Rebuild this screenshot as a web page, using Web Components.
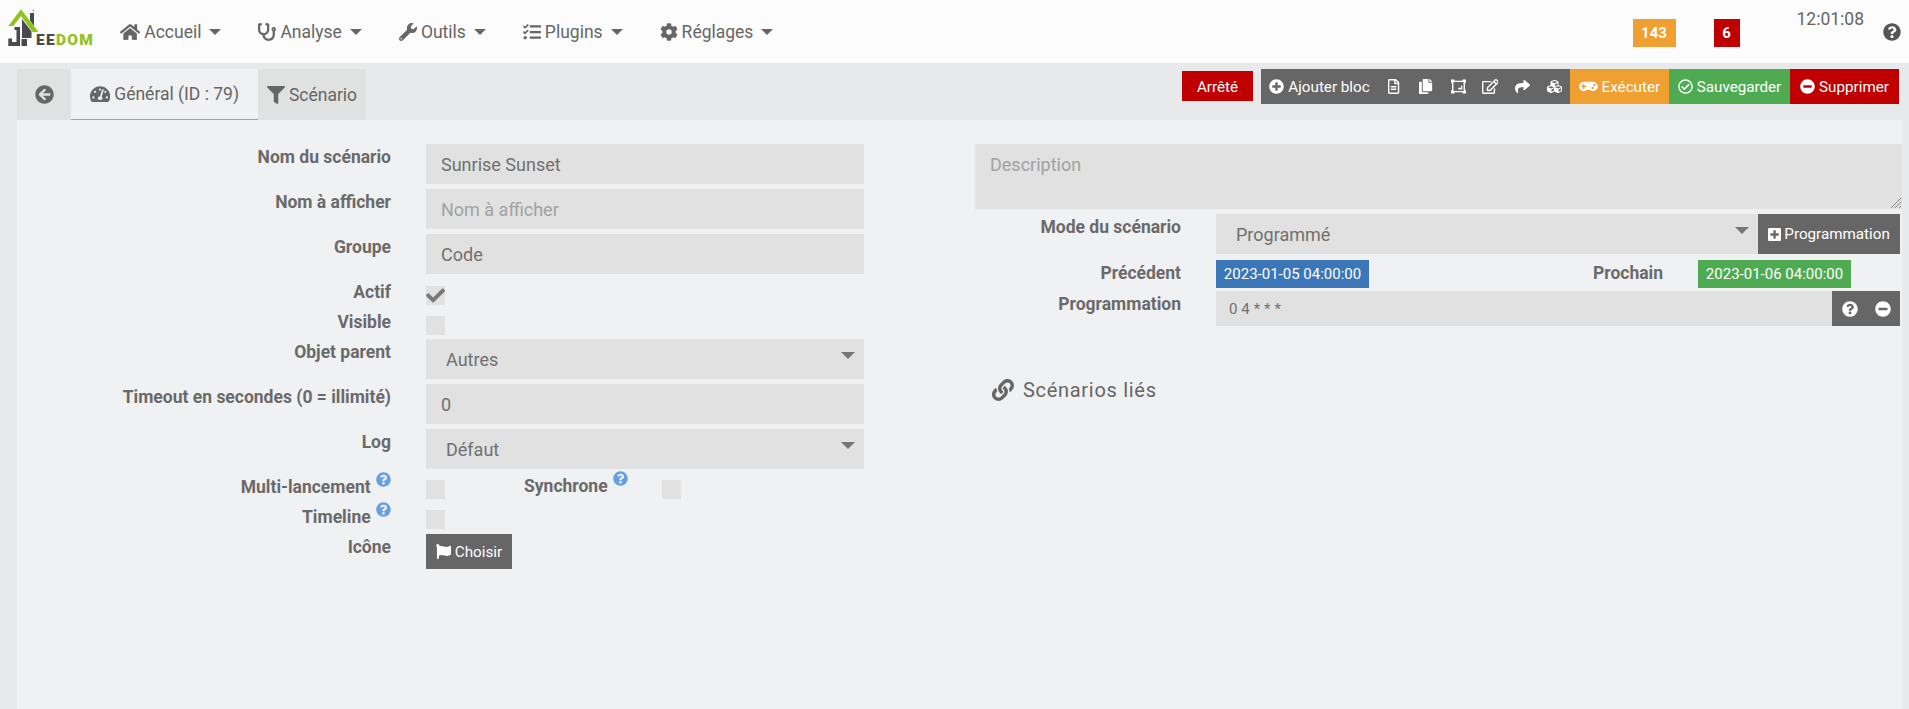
<!DOCTYPE html>
<html lang="fr">
<head>
<meta charset="utf-8">
<title>Jeedom - Scénario</title>
<style>
  html, body { margin: 0; height: 100%; overflow: hidden; }
  body { background: #e8e9eb; font-family: Roboto, "Liberation Sans", sans-serif; color: #666; }
</style>
</head>
<body>
<jd-app></jd-app>
<script>
const ICONS = {
  home: [576, 'M280.37 148.26L96 300.11V464a16 16 0 0 0 16 16l112.06-.29a16 16 0 0 0 15.92-16V368a16 16 0 0 1 16-16h64a16 16 0 0 1 16 16v95.64a16 16 0 0 0 16 16.05L464 480a16 16 0 0 0 16-16V300L295.67 148.26a12.19 12.19 0 0 0-15.3 0zM571.6 251.47L488 182.56V44.05a12 12 0 0 0-12-12h-56a12 12 0 0 0-12 12v72.61L318.47 43a48 48 0 0 0-61 0L4.34 251.47a12 12 0 0 0-1.6 16.9l25.5 31A12 12 0 0 0 45.15 301l235.22-193.74a12.19 12.19 0 0 1 15.3 0L530.9 301a12 12 0 0 0 16.9-1.6l25.5-31a12 12 0 0 0-1.7-16.93z'],
  stethoscope: [512, 'M447.1 112c-34.2.5-62.3 28.4-63 62.6-.5 24.3 12.5 45.6 32 56.8V344c0 57.3-50.2 104-112 104-60 0-109.2-44.1-111.9-99.2C265 333.8 320 269.2 320 192V36.6c0-11.4-8.1-21.3-19.3-23.5L237.8.5c-13-2.6-25.6 5.8-28.2 18.8L206.4 35c-2.6 13 5.8 25.6 18.8 28.2l30.7 6.1v121.4c0 52.9-42.2 96.7-95.1 97.2-53.4.5-96.9-42.7-96.9-96V69.4l30.7-6.1c13-2.6 21.4-15.2 18.8-28.2l-3.1-15.7C107.7 6.4 95.1-2 82.1.6L19.3 13C8.1 15.3 0 25.1 0 36.6V192c0 77.3 55.1 142 128.1 156.8C130.7 439.2 208.6 512 304 512c97 0 176-75.4 176-168V231.4c19.1-11.1 32-31.7 32-55.4 0-35.7-29.2-64.5-64.9-64zm.9 80c-8.8 0-16-7.2-16-16s7.2-16 16-16 16 7.2 16 16-7.2 16-16 16z'],
  wrench: [512, 'M507.73 109.1c-2.24-9.03-13.54-12.09-20.12-5.51l-74.36 74.36-67.88-11.31-11.31-67.88 74.36-74.36c6.62-6.62 3.43-17.9-5.66-20.16-47.38-11.74-99.55.91-136.58 37.93-39.64 39.64-50.55 97.1-34.05 147.2L18.74 402.76c-24.99 24.99-24.99 65.51 0 90.5 24.99 24.99 65.51 24.99 90.5 0l213.21-213.21c50.12 16.71 107.47 5.68 147.37-34.22 37.07-37.07 49.7-89.32 37.91-136.73zM64 472c-13.25 0-24-10.75-24-24 0-13.26 10.75-24 24-24s24 10.74 24 24c0 13.25-10.75 24-24 24z'],
  tasks: [512, 'M139.61 35.5a12 12 0 0 0-17 0L58.93 98.81l-22.7-22.12a12 12 0 0 0-17 0L3.53 92.41a12 12 0 0 0 0 17l47.59 47.4a12.78 12.78 0 0 0 17.61 0l15.59-15.62L156.52 69a12.09 12.09 0 0 0 .09-17zm0 159.19a12 12 0 0 0-17 0l-63.68 63.72-22.7-22.1a12 12 0 0 0-17 0L3.53 252a12 12 0 0 0 0 17L51 316.5a12.77 12.77 0 0 0 17.6 0l15.7-15.69 72.2-72.22a12 12 0 0 0 .09-16.9zM64 368c-26.49 0-48.59 21.5-48.59 48S37.53 464 64 464a48 48 0 0 0 0-96zm432 16H208a16 16 0 0 0-16 16v32a16 16 0 0 0 16 16h288a16 16 0 0 0 16-16v-32a16 16 0 0 0-16-16zm0-320H208a16 16 0 0 0-16 16v32a16 16 0 0 0 16 16h288a16 16 0 0 0 16-16V80a16 16 0 0 0-16-16zm0 160H208a16 16 0 0 0-16 16v32a16 16 0 0 0 16 16h288a16 16 0 0 0 16-16v-32a16 16 0 0 0-16-16z'],
  cog: [512, 'M487.4 315.7l-42.6-24.6c4.3-23.2 4.3-47 0-70.2l42.6-24.6c4.9-2.8 7.1-8.6 5.5-14-11.1-35.6-30-67.8-54.7-94.6-3.8-4.1-10-5.1-14.8-2.3L380.8 110c-17.9-15.4-38.5-27.3-60.8-35.1V25.8c0-5.6-3.9-10.5-9.4-11.7-36.7-8.2-74.3-7.8-109.2 0-5.5 1.2-9.4 6.1-9.4 11.7V75c-22.2 7.9-42.8 19.8-60.8 35.1L88.7 85.5c-4.9-2.8-11-1.9-14.8 2.3-24.7 26.7-43.6 58.9-54.7 94.6-1.7 5.4.6 11.2 5.5 14L67.3 221c-4.3 23.2-4.3 47 0 70.2l-42.6 24.6c-4.9 2.8-7.1 8.6-5.5 14 11.1 35.6 30 67.8 54.7 94.6 3.8 4.1 10 5.1 14.8 2.3l42.6-24.6c17.9 15.4 38.5 27.3 60.8 35.1v49.2c0 5.6 3.9 10.5 9.4 11.7 36.7 8.2 74.3 7.8 109.2 0 5.5-1.2 9.4-6.1 9.4-11.7v-49.2c22.2-7.9 42.8-19.8 60.8-35.1l42.6 24.6c4.9 2.8 11 1.9 14.8-2.3 24.7-26.7 43.6-58.9 54.7-94.6 1.5-5.5-.7-11.3-5.6-14.1zM256 336c-44.1 0-80-35.9-80-80s35.9-80 80-80 80 35.9 80 80-35.9 80-80 80z'],
  back: [512, 'M256 504C119 504 8 393 8 256S119 8 256 8s248 111 248 248-111 248-248 248zm28.9-143.6L209.4 288H392c13.3 0 24-10.7 24-24v-16c0-13.3-10.7-24-24-24H209.4l75.5-72.4c9.7-9.3 9.9-24.8.4-34.3l-11-10.9c-9.4-9.4-24.6-9.4-33.9 0L107.7 239c-9.4 9.4-9.4 24.6 0 33.9l132.7 132.7c9.4 9.4 24.6 9.4 33.9 0l11-10.9c9.5-9.5 9.3-25-.4-34.3z'],
  gauge: [576, 'M288 32C128.94 32 0 160.94 0 320c0 52.8 14.25 102.26 39.06 144.8 5.61 9.62 16.3 15.2 27.44 15.2h443c11.14 0 21.83-5.58 27.44-15.2C561.75 422.26 576 372.8 576 320c0-159.06-128.94-288-288-288zm0 64c14.71 0 26.58 10.13 30.32 23.65-1.11 2.26-2.64 4.23-3.45 6.67l-9.22 27.67c-5.13 3.49-10.97 6.01-17.64 6.01-17.67 0-32-14.33-32-32S270.33 96 288 96zM96 384c-17.67 0-32-14.33-32-32s14.33-32 32-32 32 14.33 32 32-14.33 32-32 32zm48-160c-17.67 0-32-14.33-32-32s14.33-32 32-32 32 14.33 32 32-14.33 32-32 32zm246.77-72.41l-61.33 184C343.13 347.33 352 364.54 352 384c0 11.72-3.38 22.55-8.88 32H232.88c-5.5-9.45-8.88-20.28-8.88-32 0-33.94 26.5-61.43 59.9-63.59l61.34-184.01c4.17-12.56 17.73-19.45 30.36-15.17 12.57 4.19 19.35 17.79 15.17 30.36zm14.66 57.2l15.52-46.55c3.47-1.29 7.13-2.23 11.05-2.23 17.67 0 32 14.33 32 32s-14.33 32-32 32c-11.38-.01-20.89-6.28-26.57-15.22zM480 384c-17.67 0-32-14.33-32-32s14.33-32 32-32 32 14.33 32 32-14.33 32-32 32z'],
  filter: [512, 'M487.976 0H24.028C2.71 0-8.047 25.866 7.058 40.971L192 225.941V432c0 7.831 3.821 15.17 10.237 19.662l80 55.98C298.02 518.69 320 507.493 320 487.98V225.941l184.947-184.97C520.021 25.896 509.338 0 487.976 0z'],
  plusc: [512, 'M256 8C119 8 8 119 8 256s111 248 248 248 248-111 248-248S393 8 256 8zm144 276c0 6.6-5.4 12-12 12h-92v92c0 6.6-5.4 12-12 12h-56c-6.6 0-12-5.4-12-12v-92h-92c-6.6 0-12-5.4-12-12v-56c0-6.6 5.4-12 12-12h92v-92c0-6.6 5.4-12 12-12h56c6.6 0 12 5.4 12 12v92h92c6.6 0 12 5.4 12 12v56z'],
  file: [384, 'M288 248v28c0 6.6-5.4 12-12 12H108c-6.6 0-12-5.4-12-12v-28c0-6.6 5.4-12 12-12h168c6.6 0 12 5.4 12 12zm-12 72H108c-6.6 0-12 5.4-12 12v28c0 6.6 5.4 12 12 12h168c6.6 0 12-5.4 12-12v-28c0-6.6-5.4-12-12-12zm108-188.1V464c0 26.5-21.5 48-48 48H48c-26.5 0-48-21.5-48-48V48C0 21.5 21.5 0 48 0h204.1C264.8 0 277 5.1 286 14.1L369.9 98c9 8.9 14.1 21.2 14.1 33.9zm-128-80V128h76.1L256 51.9zM336 464V176H232c-13.3 0-24-10.7-24-24V48H48v416h288z'],
  copy: [448, 'M320 448v40c0 13.255-10.745 24-24 24H24c-13.255 0-24-10.745-24-24V120c0-13.255 10.745-24 24-24h72v296c0 30.879 25.121 56 56 56h168zm0-344V0H152c-13.255 0-24 10.745-24 24v368c0 13.255 10.745 24 24 24h272c13.255 0 24-10.745 24-24V128H344c-13.2 0-24-10.8-24-24zm120.971-31.029L375.029 7.029A24 24 0 0 0 358.059 0H352v96h96v-6.059a24 24 0 0 0-7.029-16.97z'],
  frame: [512, 'M0 20h120v36h272V20h120v112h-34v248h34v112H392v-36H120v36H0V380h34V132H0zM84 100V412H428V100zM250 300h90v-70h44v126H250z', 'evenodd'],
  edit: [576, 'M402.3 344.9l32-32c5-5 13.7-1.5 13.7 5.7V464c0 26.5-21.5 48-48 48H48c-26.5 0-48-21.5-48-48V112c0-26.5 21.5-48 48-48h273.5c7.1 0 10.7 8.6 5.7 13.7l-32 32c-1.5 1.5-3.5 2.3-5.7 2.3H48v352h352V350.5c0-2.1.8-4.1 2.3-5.6zm156.6-201.8L296.3 405.7l-90.4 10c-26.2 2.9-48.5-19.2-45.6-45.6l10-90.4L432.9 17.1c22.9-22.9 59.9-22.9 82.7 0l43.2 43.2c22.9 22.9 22.9 60 .1 82.8zM460.1 174L402 115.9 216.2 301.8l-7.3 65.3 65.3-7.3L460.1 174zm64.8-79.7l-43.2-43.2c-4.1-4.1-10.8-4.1-14.8 0L436 82l58.1 58.1 30.9-30.9c4-4.2 4-10.8-.1-14.9z'],
  share: [512, 'M503.691 189.836L327.687 37.851C312.281 24.546 288 35.347 288 56.015v80.053C127.371 137.907 0 170.1 0 322.326c0 61.441 39.581 122.309 83.333 154.132 13.653 9.931 33.111-2.533 28.077-18.631C66.066 312.814 132.917 274.316 288 272.085V360c0 20.7 24.3 31.453 39.687 18.164l176.004-152c11.071-9.562 11.086-26.753 0-36.328z'],
  cubes: [512, 'M488.6 250.2L392 214V105.5c0-15-9.3-28.4-23.4-33.7l-100-37.5c-8.1-3.1-17.1-3.1-25.3 0l-100 37.5c-14.1 5.3-23.4 18.7-23.4 33.7V214l-96.6 36.2C9.3 255.5 0 268.9 0 283.9V394c0 13.6 7.7 26.1 19.9 32.2l100 50c10.1 5.1 22.1 5.1 32.2 0l103.9-52 103.9 52c10.1 5.1 22.1 5.1 32.2 0l100-50c12.2-6.1 19.9-18.6 19.9-32.2V283.9c0-15-9.3-28.4-23.4-33.7zM358 214.8l-85 31.9v-68.2l85-37v73.3zM154 104.1l102-38.2 102 38.2v.6l-102 41.4-102-41.4v-.6zm84 291.1l-85 42.5v-79.1l85-38.8v75.4zm0-112l-102 41.4-102-41.4v-.6l102-38.2 102 38.2v.6zm240 112l-85 42.5v-79.1l85-38.8v75.4zm0-112l-102 41.4-102-41.4v-.6l102-38.2 102 38.2v.6z'],
  gamepad: [640, 'M480.07 96H160a160 160 0 1 0 114.24 272h91.52A160 160 0 1 0 480.07 96zM248 268a12 12 0 0 1-12 12h-52v52a12 12 0 0 1-12 12h-24a12 12 0 0 1-12-12v-52H84a12 12 0 0 1-12-12v-24a12 12 0 0 1 12-12h52v-52a12 12 0 0 1 12-12h24a12 12 0 0 1 12 12v52h52a12 12 0 0 1 12 12zm216 76a40 40 0 1 1 40-40 40 40 0 0 1-40 40zm64-96a40 40 0 1 1 40-40 40 40 0 0 1-40 40z'],
  checkc: [512, 'M256 8C119.033 8 8 119.033 8 256s111.033 248 248 248 248-111.033 248-248S392.967 8 256 8zm0 48c110.532 0 200 89.451 200 200 0 110.532-89.451 200-200 200-110.532 0-200-89.451-200-200 0-110.532 89.451-200 200-200m140.204 130.267l-22.536-22.718c-4.667-4.705-12.265-4.736-16.97-.068L215.346 303.697l-59.792-60.277c-4.667-4.705-12.265-4.736-16.97-.069l-22.719 22.536c-4.705 4.667-4.736 12.265-.068 16.971l90.781 91.516c4.667 4.705 12.265 4.736 16.97.068l172.589-171.204c4.704-4.668 4.734-12.266.067-16.971z'],
  minusc: [512, 'M256 8C119 8 8 119 8 256s111 248 248 248 248-111 248-248S393 8 256 8zM124 296c-6.6 0-12-5.4-12-12v-56c0-6.6 5.4-12 12-12h264c6.6 0 12 5.4 12 12v56c0 6.6-5.4 12-12 12H124z'],
  help: [512, 'M504 256c0 136.997-111.043 248-248 248S8 392.997 8 256C8 119.083 119.043 8 256 8s248 111.083 248 248zM262.655 90c-54.497 0-89.255 22.957-116.549 63.758-3.536 5.286-2.353 12.415 2.715 16.258l34.699 26.31c5.205 3.947 12.621 3.008 16.665-2.122 17.864-22.658 30.113-35.797 57.303-35.797 20.429 0 45.698 13.148 45.698 32.958 0 14.976-12.363 22.667-32.534 33.976C247.128 238.528 216 254.941 216 296v4c0 6.627 5.373 12 12 12h56c6.627 0 12-5.373 12-12v-1.333c0-28.462 83.186-29.647 83.186-106.667 0-58.002-60.165-102-116.531-102zM256 338c-25.365 0-46 20.635-46 46 0 25.364 20.635 46 46 46s46-20.636 46-46c0-25.365-20.635-46-46-46z'],
  pluss: [448, 'M400 32H48C21.5 32 0 53.5 0 80v352c0 26.5 21.5 48 48 48h352c26.5 0 48-21.5 48-48V80c0-26.5-21.5-48-48-48zm-32 252c0 6.6-5.4 12-12 12h-92v92c0 6.6-5.4 12-12 12h-56c-6.6 0-12-5.4-12-12v-92H92c-6.6 0-12-5.4-12-12v-56c0-6.6 5.4-12 12-12h92v-92c0-6.6 5.4-12 12-12h56c6.6 0 12 5.4 12 12v92h92c6.6 0 12 5.4 12 12v56z'],
  flag: [512, 'M349.565 98.783C295.978 98.783 251.721 64 184.348 64c-24.955 0-47.309 4.384-68.045 12.013a55.947 55.947 0 0 0 3.586-23.562C118.117 24.015 94.806 1.206 66.338.048 34.345-1.254 8 24.296 8 56c0 19.026 9.497 35.825 24 45.945V488c0 13.255 10.745 24 24 24h16c13.255 0 24-10.745 24-24v-94.4c28.311-12.064 63.582-22.122 114.435-22.122 53.588 0 97.844 34.783 165.217 34.783 48.169 0 86.667-16.294 122.505-40.858C506.84 359.452 512 349.571 512 339.045v-243.1c0-23.393-24.269-38.87-45.485-29.016-34.338 15.948-76.454 31.854-116.95 31.854z'],
  link: [512, 'M326.612 185.391c59.747 59.809 58.927 155.698.36 214.59-.11.12-.24.25-.36.37l-67.2 67.2c-59.27 59.27-155.699 59.262-214.96 0-59.27-59.26-59.27-155.7 0-214.96l37.106-37.106c9.84-9.84 26.786-3.3 27.294 10.606.648 17.722 3.826 35.527 9.69 52.721 1.986 5.822.567 12.262-3.783 16.612l-13.087 13.087c-28.026 28.026-28.905 73.66-1.155 101.96 28.024 28.579 74.086 28.749 102.325.51l67.2-67.19c28.191-28.191 28.073-73.757 0-101.83-3.701-3.694-7.429-6.564-10.341-8.569a16.037 16.037 0 0 1-6.947-12.606c-.396-10.567 3.348-21.456 11.698-29.806l21.054-21.055c5.521-5.521 14.182-6.199 20.584-1.731a152.482 152.482 0 0 1 20.522 17.197zM467.547 44.449c-59.261-59.262-155.69-59.27-214.96 0l-67.2 67.2c-.12.12-.25.25-.36.37-58.566 58.892-59.387 154.781.36 214.59a152.454 152.454 0 0 0 20.521 17.196c6.402 4.468 15.064 3.789 20.584-1.731l21.054-21.055c8.35-8.35 12.094-19.239 11.698-29.806a16.037 16.037 0 0 0-6.947-12.606c-2.912-2.005-6.64-4.875-10.341-8.569-28.073-28.073-28.191-73.639 0-101.83l67.2-67.19c28.239-28.239 74.3-28.069 102.325.51 27.75 28.3 26.872 73.934-1.155 101.96l-13.087 13.087c-4.35 4.35-5.769 10.79-3.783 16.612 5.864 17.194 9.042 34.999 9.69 52.721.509 13.906 17.454 20.446 27.294 10.606l37.106-37.106c59.271-59.259 59.271-155.699.001-214.959z'],
  check: [512, 'M173.898 439.404l-166.4-166.4c-9.997-9.997-9.997-26.206 0-36.204l36.203-36.204c9.997-9.998 26.207-9.998 36.204 0L192 312.69 432.095 72.596c9.997-9.997 26.207-9.997 36.204 0l36.203 36.204c9.997 9.997 9.997 26.206 0 36.204l-294.4 294.401c-9.998 9.997-26.207 9.997-36.204-.001z']
};

class JdIcon extends HTMLElement {
  connectedCallback() {
    const [w, d, rule] = ICONS[this.getAttribute('name')];
    this.attachShadow({ mode: 'open' });
    this.shadowRoot.innerHTML = `
      <style>
        :host { display: inline-flex; align-items: center; flex: none; }
        svg { height: 1em; width: auto; display: block; fill: currentColor; }
      </style>
      <svg viewBox="0 0 ${w} 512" fill-rule="${rule || 'nonzero'}" aria-hidden="true"><path d="${d}"/></svg>`;
  }
}
customElements.define('jd-icon', JdIcon);

class JdLogo extends HTMLElement {
  connectedCallback() {
    this.attachShadow({ mode: 'open' });
    this.shadowRoot.innerHTML = `
      <style>
        :host { display: block; position: relative; width: 86px; height: 39px; flex: none; align-self: flex-start; margin-top: 8px; }
        svg { position: absolute; left: 0; top: 0; }
        span { position: absolute; left: 28px; top: 26px; font: 900 15.5px/13px Roboto, sans-serif; letter-spacing: 1.3px; color: #4a4a4c; }
        b { font-weight: 900; color: #93c11f; }
      </style>
      <svg width="34" height="39" viewBox="0 0 34 39">
        <path d="M14 11 L23.5 23.5 V30 H14Z M22 5 H26 V18 L22 12.5Z" fill="#4a4a4c"/>
        <path d="M6.5 19 H12 V38 H0.3 V30.5 H4 V34 H8.5 V22 H6.5Z" fill="#4a4a4c"/>
        <path d="M13.5 31 H19 V38 H13.5Z" fill="#4a4a4c"/>
        <path d="M0.3 18 L13 1.3 L30.5 24 L24.5 24 L13 8 L5.3 18Z" fill="#8fc31f"/>
        <circle cx="25.5" cy="2.5" r="1" fill="#aaa"/>
      </svg>
      <span>EE<b>DOM</b></span>`;
  }
}
customElements.define('jd-logo', JdLogo);

class JdNavItem extends HTMLElement {
  connectedCallback() {
    this.attachShadow({ mode: 'open' });
    this.shadowRoot.innerHTML = `
      <style>
        :host { display: flex; align-items: center; gap: 4px; font-size: 17.5px; color: #666; }
        jd-icon { font-size: 18px; }
        i { width: 0; height: 0; margin-left: 4px; border: 6px solid transparent; border-top-color: #666; border-bottom: 0; }
      </style>
      <jd-icon name="${this.getAttribute('icon')}"></jd-icon><slot></slot><i></i>`;
  }
}
customElements.define('jd-nav-item', JdNavItem);

class JdBadge extends HTMLElement {
  connectedCallback() {
    this.attachShadow({ mode: 'open' });
    this.shadowRoot.innerHTML = `
      <style>
        :host { display: flex; align-items: center; justify-content: center; color: #fff; flex: none; }
      </style>
      <slot></slot>`;
  }
}
customElements.define('jd-badge', JdBadge);

class JdNavbar extends HTMLElement {
  connectedCallback() {
    this.attachShadow({ mode: 'open' });
    this.shadowRoot.innerHTML = `
      <style>
        :host { display: flex; align-items: center; height: 63px; padding: 0 8px; box-sizing: border-box; background: #fcfcfc; }
        nav { display: flex; margin-left: 26px; gap: 37px; }
        .right { margin-left: auto; display: flex; height: 100%; }
        jd-badge { height: 28px; margin-top: 19px; font-weight: 700; font-size: 15px; }
        .warn { width: 43px; background: #f0a030; margin-right: 38px; }
        .err { width: 26px; background: #c00000; margin-right: 57px; }
        time { font-size: 17.5px; line-height: 20px; margin-top: 9px; color: #666; }
        jd-icon { font-size: 18px; margin: 23px 0 0 19px; height: 18px; color: #555; }
      </style>
      <jd-logo></jd-logo>
      <nav>
        <jd-nav-item icon="home">Accueil</jd-nav-item>
        <jd-nav-item icon="stethoscope">Analyse</jd-nav-item>
        <jd-nav-item icon="wrench">Outils</jd-nav-item>
        <jd-nav-item icon="tasks">Plugins</jd-nav-item>
        <jd-nav-item icon="cog">Réglages</jd-nav-item>
      </nav>
      <div class="right">
        <jd-badge class="warn">143</jd-badge>
        <jd-badge class="err">6</jd-badge>
        <time>12:01:08</time>
        <jd-icon name="help"></jd-icon>
      </div>`;
  }
}
customElements.define('jd-navbar', JdNavbar);

class JdTab extends HTMLElement {
  connectedCallback() {
    this.attachShadow({ mode: 'open' });
    this.shadowRoot.innerHTML = `
      <style>
        :host { display: flex; align-items: center; gap: 4px; box-sizing: border-box; height: 51px; background: #e0e1e1; color: #666; font-size: 17.5px; }
        :host([active]) { background: #f0f1f3; border-bottom: 1px solid #93c11f; }
      </style>
      <slot></slot>`;
  }
}
customElements.define('jd-tab', JdTab);

class JdButton extends HTMLElement {
  connectedCallback() {
    this.attachShadow({ mode: 'open' });
    this.shadowRoot.innerHTML = `
      <style>
        :host { display: inline-flex; align-items: center; justify-content: center; gap: 4px; box-sizing: border-box; background: var(--bg, #666); color: #fff; font-size: 15.2px; flex: none; white-space: nowrap; }
      </style>
      <slot></slot>`;
  }
}
customElements.define('jd-button', JdButton);

class JdToolbar extends HTMLElement {
  connectedCallback() {
    this.attachShadow({ mode: 'open' });
    this.shadowRoot.innerHTML = `
      <style>
        :host { display: flex; align-items: flex-start; gap: 8px; padding-right: 10px; }
        .arrete { width: 71px; height: 30px; margin-top: 2px; padding-top: 1px; background: #c00000; }
        .group { display: flex; height: 35px; }
        .group jd-button { height: 35px; }
        .group jd-icon { font-size: 15px; }
        .add { width: 117px; }
        .ic { width: 32px; }
        .run { width: 99px; --bg: #f0a030; }
        .save { width: 121px; --bg: #4fab52; }
        .del { width: 109px; --bg: #c00000; }
      </style>
      <jd-button class="arrete">Arrêté</jd-button>
      <div class="group">
        <jd-button class="add"><jd-icon name="plusc"></jd-icon>Ajouter bloc</jd-button>
        <jd-button class="ic"><jd-icon name="file"></jd-icon></jd-button>
        <jd-button class="ic"><jd-icon name="copy"></jd-icon></jd-button>
        <jd-button class="ic"><jd-icon name="frame"></jd-icon></jd-button>
        <jd-button class="ic"><jd-icon name="edit"></jd-icon></jd-button>
        <jd-button class="ic"><jd-icon name="share"></jd-icon></jd-button>
        <jd-button class="ic"><jd-icon name="cubes"></jd-icon></jd-button>
        <jd-button class="run"><jd-icon name="gamepad"></jd-icon>Exécuter</jd-button>
        <jd-button class="save"><jd-icon name="checkc"></jd-icon>Sauvegarder</jd-button>
        <jd-button class="del"><jd-icon name="minusc"></jd-icon>Supprimer</jd-button>
      </div>`;
  }
}
customElements.define('jd-toolbar', JdToolbar);

// label on the left, control in the slot on the right
class JdField extends HTMLElement {
  connectedCallback() {
    this.attachShadow({ mode: 'open' });
    this.shadowRoot.innerHTML = `
      <style>
        :host { display: grid; grid-template-columns: var(--label-w, 374px) 1fr; column-gap: 35px; }
        label { display: block; text-align: right; font-weight: 700; font-size: 17.5px; line-height: 24px; padding-top: var(--label-pad, 1px); color: #6a6a6a; white-space: nowrap; }
        .ctl { min-width: 0; }
      </style>
      <label><slot name="label"></slot></label>
      <div class="ctl"><slot></slot></div>`;
  }
}
customElements.define('jd-field', JdField);

class JdInput extends HTMLElement {
  connectedCallback() {
    this.attachShadow({ mode: 'open' });
    this.shadowRoot.innerHTML = `
      <style>
        :host { display: flex; align-items: center; box-sizing: border-box; height: 40px; padding: 1px 0 0 15px; background: #e0e1e0; color: #707070; font-size: 18px; position: relative; }
        :host([placeholder]) { color: #a2a2a2; }
        :host([select]) { padding-left: 20px; }
        i { display: none; position: absolute; right: 9px; top: 13px; width: 0; height: 0; border: 7.5px solid transparent; border-top-color: #777; border-bottom: 0; }
        :host([select]) i { display: block; }
      </style>
      <slot></slot><i></i>`;
  }
}
customElements.define('jd-input', JdInput);

class JdCheck extends HTMLElement {
  connectedCallback() {
    this.attachShadow({ mode: 'open' });
    this.shadowRoot.innerHTML = `
      <style>
        :host { display: flex; align-items: center; justify-content: center; width: 19px; height: 19px; background: #e0e1e0; color: #777; flex: none; }
        jd-icon { font-size: 19px; }
      </style>
      ${this.hasAttribute('checked') ? '<jd-icon name="check"></jd-icon>' : ''}`;
  }
}
customElements.define('jd-check', JdCheck);

class JdGeneralForm extends HTMLElement {
  connectedCallback() {
    this.attachShadow({ mode: 'open' });
    this.shadowRoot.innerHTML = `
      <style>
        :host { display: block; width: 847px; flex: none; }
        jd-field { margin-bottom: 5px; }
        .chk { height: 30px; margin-bottom: 0; --label-pad: 0; }
        jd-check { margin-top: 6px; }
        .tip { color: #64a1e3; font-size: 15px; display: inline-flex; height: 15px; margin-left: 1px; position: relative; top: -6px; line-height: 0; vertical-align: baseline; }
        .sync { display: flex; }
        .sync b { font-size: 17.5px; line-height: 24px; color: #6a6a6a; margin-left: 79px; width: 138px; white-space: nowrap; }
        jd-button { width: 86px; height: 35px; }
        jd-button jd-icon { font-size: 15px; }
      </style>
      <jd-field><span slot="label">Nom du scénario</span><jd-input>Sunrise Sunset</jd-input></jd-field>
      <jd-field><span slot="label">Nom à afficher</span><jd-input placeholder>Nom à afficher</jd-input></jd-field>
      <jd-field style="margin-bottom:6px"><span slot="label">Groupe</span><jd-input>Code</jd-input></jd-field>
      <jd-field class="chk"><span slot="label">Actif</span><jd-check checked></jd-check></jd-field>
      <jd-field class="chk" style="height:29px"><span slot="label">Visible</span><jd-check></jd-check></jd-field>
      <jd-field><span slot="label">Objet parent</span><jd-input select>Autres</jd-input></jd-field>
      <jd-field><span slot="label">Timeout en secondes (0 = illimité)</span><jd-input>0</jd-input></jd-field>
      <jd-field><span slot="label">Log</span><jd-input select>Défaut</jd-input></jd-field>
      <jd-field class="chk" style="--label-pad:1px"><span slot="label">Multi-lancement <span class="tip"><jd-icon name="help"></jd-icon></span></span>
        <div class="sync"><jd-check></jd-check><b>Synchrone <span class="tip"><jd-icon name="help"></jd-icon></span></b><jd-check></jd-check></div>
      </jd-field>
      <jd-field class="chk" style="--label-pad:1px"><span slot="label">Timeline <span class="tip"><jd-icon name="help"></jd-icon></span></span><jd-check></jd-check></jd-field>
      <jd-field><span slot="label">Icône</span><jd-button><jd-icon name="flag"></jd-icon>Choisir</jd-button></jd-field>`;
  }
}
customElements.define('jd-general-form', JdGeneralForm);

class JdScheduleForm extends HTMLElement {
  connectedCallback() {
    this.attachShadow({ mode: 'open' });
    this.shadowRoot.innerHTML = `
      <style>
        :host { display: block; flex: 1; min-width: 0; margin-left: 111px; --label-w: 206px; }
        .desc { height: 65px; align-items: flex-start; padding-top: 10px; margin-bottom: 5px; }
        .grip { position: absolute; right: 0; bottom: 0; }
        jd-field { padding-right: 2px; }
        .row { display: flex; }
        .row jd-input { flex: 1; }
        .mode { margin-bottom: 6px; }
        .prog { width: 142px; height: 40px; gap: 3px; }
        .prog jd-icon { font-size: 15px; }
        .dates { display: flex; height: 28px; margin-bottom: 3px; }
        .date { width: 153px; height: 28px; background: #3a76b8; font-size: 15px; }
        .next { background: #4fab52; }
        .dates b { width: 329px; text-align: right; padding-right: 35px; box-sizing: border-box; font-size: 17.5px; line-height: 26px; color: #6a6a6a; }
        .cron { height: 35px; font-size: 15px; padding: 0 0 0 13px; letter-spacing: .1px; }
        .tools { width: 68px; height: 35px; gap: 17px; }
        .tools jd-icon { font-size: 16px; }
        h3 { display: flex; align-items: center; gap: 9px; margin: 52px 0 0 17px; font-weight: 400; font-size: 20px; letter-spacing: .7px; color: #666; }
        h3 jd-icon { font-size: 22px; }
      </style>
      <jd-input class="desc" placeholder>Description
        <svg class="grip" width="12" height="12" viewBox="0 0 12 12"><path d="M1 11 L11 1 M5 11 L11 5 M9 11 L11 9" stroke="#888" stroke-width="1" fill="none"/></svg>
      </jd-input>
      <jd-field class="mode"><span slot="label">Mode du scénario</span>
        <div class="row"><jd-input select>Programmé</jd-input><jd-button class="prog"><jd-icon name="pluss"></jd-icon>Programmation</jd-button></div>
      </jd-field>
      <jd-field><span slot="label">Précédent</span>
        <div class="dates"><jd-badge class="date">2023-01-05 04:00:00</jd-badge><b>Prochain</b><jd-badge class="date next">2023-01-06 04:00:00</jd-badge></div>
      </jd-field>
      <jd-field><span slot="label">Programmation</span>
        <div class="row"><jd-input class="cron">0 4 * * *</jd-input><jd-button class="tools"><jd-icon name="help"></jd-icon><jd-icon name="minusc"></jd-icon></jd-button></div>
      </jd-field>
      <h3><jd-icon name="link"></jd-icon>Scénarios liés</h3>`;
  }
}
customElements.define('jd-schedule-form', JdScheduleForm);

class JdApp extends HTMLElement {
  connectedCallback() {
    this.attachShadow({ mode: 'open' });
    this.shadowRoot.innerHTML = `
      <style>
        :host { display: flex; flex-direction: column; height: 709px; }
        .bar { display: flex; align-items: flex-start; padding: 6px 0 0 17px; height: 57px; box-sizing: border-box; }
        .tabs { display: flex; }
        .back { width: 54px; justify-content: center; font-size: 19px; }
        .gen { width: 187px; justify-content: center; }
        .scn { width: 108px; justify-content: center; }
        .gen jd-icon, .scn jd-icon { font-size: 18px; }
        jd-toolbar { margin-left: auto; }
        main { flex: 1; display: flex; margin: 0 7px 0 17px; padding-top: 24px; background: #f0f1f3; }
      </style>
      <jd-navbar></jd-navbar>
      <div class="bar">
        <div class="tabs">
          <jd-tab class="back"><jd-icon name="back"></jd-icon></jd-tab>
          <jd-tab class="gen" active><jd-icon name="gauge"></jd-icon>Général (ID : 79)</jd-tab>
          <jd-tab class="scn"><jd-icon name="filter"></jd-icon>Scénario</jd-tab>
        </div>
        <jd-toolbar></jd-toolbar>
      </div>
      <main>
        <jd-general-form></jd-general-form>
        <jd-schedule-form></jd-schedule-form>
      </main>`;
  }
}
customElements.define('jd-app', JdApp);
</script>
</body>
</html>
